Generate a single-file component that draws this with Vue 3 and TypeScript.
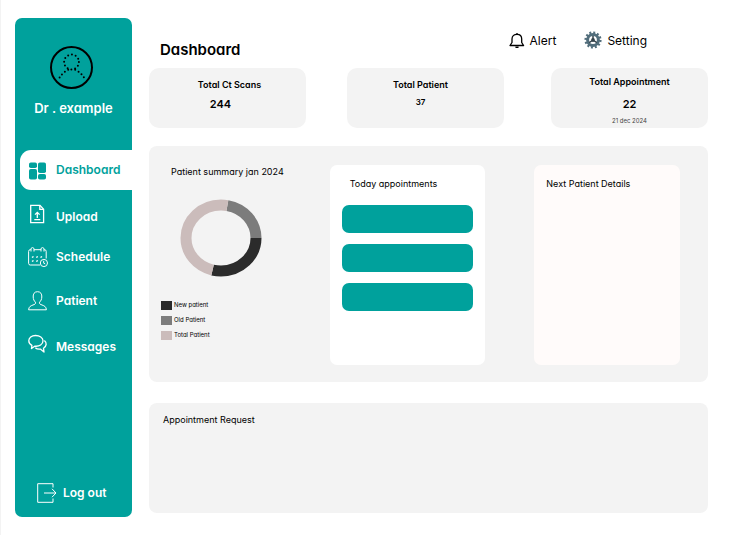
<script setup lang="ts">
interface NavItem {
  id: string
  label: string
}

interface Stat {
  id: string
  label: string
  value: string
  note?: string
}

interface Segment {
  label: string
  color: string
  start: number
  share: number
}

const navItems: NavItem[] = [
  { id: 'dashboard', label: 'Dashboard' },
  { id: 'upload', label: 'Upload' },
  { id: 'schedule', label: 'Schedule' },
  { id: 'patient', label: 'Patient' },
  { id: 'messages', label: 'Messages' },
]

const stats: Stat[] = [
  { id: 'scans', label: 'Total Ct Scans', value: '244' },
  { id: 'patients', label: 'Total Patient', value: '37' },
  { id: 'appointments', label: 'Total Appointment', value: '22', note: '21 dec 2024' },
]

// start and share are percentages of the ring, clockwise from three o'clock
const segments: Segment[] = [
  { label: 'New patient', color: '#2b2b2b', start: 0, share: 29 },
  { label: 'Old Patient', color: '#7c7c7c', start: 78, share: 22 },
  { label: 'Total Patient', color: '#cbbcbb', start: 29, share: 49 },
]

const slots: number[] = [1, 2, 3]
</script>

<template>
  <div class="page">
    <aside class="sidebar">
      <div class="profile">
        <svg class="avatar" viewBox="0 0 43 43" aria-hidden="true">
          <circle cx="21.5" cy="21.5" r="20.5" fill="none" stroke="#000" stroke-width="2" />
          <g fill="none" stroke="#000" stroke-width="2" stroke-linecap="round" stroke-dasharray="0 3.9">
            <circle cx="21.5" cy="16" r="7.4" />
            <path d="M18.2 23.8C14 26 10.5 29 8.2 34" />
            <path d="M25.2 23.8C29.5 26 33 29 35.3 34" />
          </g>
        </svg>
        <p class="name">Dr . example</p>
      </div>

      <nav class="nav">
        <a v-for="item in navItems" :key="item.id" href="#" class="nav-item" :class="{ active: item.id === 'dashboard' }">
          <svg v-if="item.id === 'dashboard'" class="icon" viewBox="0 0 20 20" fill="currentColor" aria-hidden="true">
            <rect x="1" y="2.500" width="8" height="5.500" rx="1.800" />
            <rect x="1" y="9" width="8" height="10.500" rx="1.800" />
            <rect x="10" y="2.500" width="8" height="10.500" rx="1.800" />
            <rect x="10" y="14" width="8" height="5.500" rx="1.800" />
          </svg>
          <svg v-else-if="item.id === 'upload'" class="icon raised" viewBox="0 0 20 20" fill="none" stroke="currentColor" stroke-width="1.3" aria-hidden="true">
            <path d="M2.7 1.4H12l3.6 3.8v13.4H2.7z" />
            <path d="M11.8 1.6v3.8h3.6" />
            <path d="M9.3 14V8.4M7 10.6l2.3-2.3 2.3 2.3M6.3 15.6h6" />
          </svg>
          <svg v-else-if="item.id === 'schedule'" class="icon" viewBox="0 0 20 20" fill="none" stroke="currentColor" aria-hidden="true">
            <path d="M12 18H2.200Q.6 18 .6 16.300V4.400Q.6 2.700 2.200 2.700H3M6 2.700h7M16 2.700h.6q1.600 0 1.600 1.700V11.500M3 4.500V1.400Q4.500-.2 6 1.400V4.500M13 4.500V1.400q1.500-1.600 3 0V4.500" />
            <path stroke-width="1.500" d="M4 10.500l1.500-1M8.300 10.500l1.500-1M12.500 10.500l1.500-1M4 14.500l1.500-1M8.300 14.500l1.500-1" />
            <circle cx="15.900" cy="16" r="3.600" fill="#00a19c" />
            <path d="M15.700 13.800v2.400l1.500.7" />
          </svg>
          <svg v-else-if="item.id === 'patient'" class="icon" viewBox="0 0 20 20" fill="none" stroke="currentColor" aria-hidden="true">
            <path d="M9.500.7C6.300.7 5 3 5.200 6c.1 2.300.9 4 2.200 5.100.4 1.300 0 2-1.400 2.500C2.600 14.800.8 15.600.6 18.800h17.800c-.2-3.200-2-4-5.400-5.200-1.400-.5-1.800-1.200-1.400-2.500 1.300-1.100 2.100-2.800 2.200-5.100C14 3 12.700.7 9.500.7z" />
          </svg>
          <svg v-else class="icon raised" viewBox="0 0 20 20" fill="none" stroke="currentColor" stroke-width="1.300" stroke-linejoin="round" aria-hidden="true">
            <path d="M7.500 1.500C3.600 1.500.8 3.700.8 6.800c0 2.100 1.200 3.700 3.100 4.600L3.500 14.500l3.200-2.300C11.500 12.700 15 10.400 15 6.800 15 3.700 11.700 1.500 7.500 1.500z" />
            <path d="M16.400 6.500c2.500 2.200 2.500 5.700-.9 7.700l.5 3.900-3.700-3c-2 .2-3.900-.3-5-1.300" />
          </svg>
          <span>{{ item.label }}</span>
        </a>
      </nav>

      <a href="#" class="logout">
        <svg class="icon" viewBox="0 0 20 20" fill="none" stroke="currentColor" aria-hidden="true">
          <path d="M16 4.500V.7H.7v18.600H16V15.500" />
          <path d="M7 10h12M15 5.800L19 10l-4 4.200" />
        </svg>
        <span>Log out</span>
      </a>
    </aside>

    <main class="content">
      <header class="topbar">
        <h1>Dashboard</h1>
        <div class="actions">
          <button type="button" class="action">
            <svg class="bell" viewBox="0 0 16 16" fill="none" stroke="#000" stroke-width="1.300" stroke-linejoin="round" aria-hidden="true">
              <path d="M1 12.500h13.600L12.700 9.500V6C12.700 3.200 10.700 1.300 8 1.300S3 3.200 3 6V9.500z" />
              <path d="M8 0v1.500M6.500 13.700q1.500 1.300 3 0" />
            </svg>
            <span>Alert</span>
          </button>
          <button type="button" class="action">
            <svg class="gear" viewBox="0 0 18 18" aria-hidden="true">
              <circle cx="9" cy="8" r="7.300" fill="none" stroke="#526e7c" stroke-width="2.600" stroke-dasharray="1.911 1.911" />
              <circle cx="9" cy="8" r="5.400" fill="none" stroke="#526e7c" stroke-width="3" />
              <path d="M9 8V4M9 8l-3.800 2.600M9 8l3.800 2.600" stroke="#34434b" stroke-width="1.500" />
              <circle cx="9" cy="8" r="1.900" fill="#34434b" />
            </svg>
            <span>Setting</span>
          </button>
        </div>
      </header>

      <section class="stats">
        <article v-for="stat in stats" :key="stat.id" class="stat" :class="stat.id">
          <h2>{{ stat.label }}</h2>
          <p class="value">{{ stat.value }}</p>
          <p v-if="stat.note" class="note">{{ stat.note }}</p>
        </article>
      </section>

      <section class="overview">
        <div class="summary">
          <h2>Patient summary jan 2024</h2>
          <svg class="donut" viewBox="0 0 82 78" role="img" aria-label="Patient summary">
            <ellipse
              v-for="segment in segments"
              :key="segment.label"
              cx="41"
              cy="39"
              rx="35"
              ry="33"
              fill="none"
              :stroke="segment.color"
              stroke-width="11"
              pathLength="100"
              :stroke-dasharray="`${segment.share} ${100 - segment.share}`"
              :stroke-dashoffset="-segment.start"
            />
          </svg>
          <ul class="legend">
            <li v-for="segment in segments" :key="segment.label">
              <i class="swatch" :style="{ background: segment.color }"></i>{{ segment.label }}
            </li>
          </ul>
        </div>
        <div class="today">
          <h2>Today appointments</h2>
          <ul class="slots">
            <li v-for="slot in slots" :key="slot" class="slot"></li>
          </ul>
        </div>
        <div class="next">
          <h2>Next Patient Details</h2>
        </div>
      </section>

      <section class="requests">
        <h2>Appointment Request</h2>
      </section>
    </main>
  </div>
</template>

<style>
body {
  margin: 0;
  background: #fff;
}
</style>

<style scoped>
* {
  box-sizing: border-box;
}

.page {
  display: flex;
  gap: 17px;
  min-height: 100vh;
  padding: 18px 39px 18px 14px;
  border-left: 1px solid #f3f3f3;
  font-family: Inter, "Open Sans", sans-serif;
  font-feature-settings: "cv11";
  color: #000;
}

h1,
h2,
p,
ul {
  margin: 0;
  padding: 0;
}

h2 {
  font-size: 9px;
  line-height: 14px;
  font-weight: 400;
}

ul {
  list-style: none;
}

a {
  text-decoration: none;
}

svg {
  flex: none;
}

.sidebar {
  display: flex;
  flex: none;
  flex-direction: column;
  width: 117px;
  border-radius: 7px;
  background: #00a19c;
  color: #fff;
  font-size: 12px;
  line-height: 18px;
  font-weight: 600;
}

.profile {
  display: flex;
  flex-direction: column;
  align-items: center;
  gap: 10px;
  padding: 28px 0 33px;
}

.avatar {
  width: 43px;
  height: 43px;
  margin-right: 4px;
}

.name {
  font-size: 13px;
}

.nav {
  display: grid;
  grid-template-rows: 40px 47px 40px 44px 46px;
  align-items: end;
  padding-left: 5px;
}

.nav-item {
  display: flex;
  align-items: center;
  gap: 8px;
  height: 40px;
  padding-left: 8px;
  color: #fff;
}

.nav-item.active {
  border-radius: 11px 0 0 11px;
  background: #fff;
  color: #00a19c;
}

.icon {
  width: 20px;
  height: 20px;
  overflow: visible;
}

.icon.raised {
  margin-bottom: 6px;
}

.logout {
  display: flex;
  align-items: center;
  gap: 6px;
  margin-top: auto;
  padding: 0 0 14px 22px;
  color: #fff;
}

.content {
  display: flex;
  flex: 1;
  flex-direction: column;
  min-width: 0;
  padding-bottom: 4px;
}

.topbar {
  display: flex;
  justify-content: space-between;
  height: 50px;
  padding: 12px 61px 0 11px;
}

h1 {
  padding-top: 10px;
  font-size: 15px;
  line-height: 20px;
  font-weight: 600;
}

.actions {
  display: flex;
  gap: 28px;
  height: 22px;
}

.action {
  display: flex;
  align-items: center;
  gap: 5px;
  padding: 0;
  border: 0;
  background: none;
  color: #000;
  font: inherit;
  font-feature-settings: inherit;
  font-size: 12px;
  line-height: 16px;
}

.bell {
  width: 16px;
  height: 16px;
  overflow: visible;
}

.gear {
  width: 18px;
  height: 18px;
  overflow: visible;
}

.stats {
  display: grid;
  grid-template-columns: 157fr 41fr 157fr 47fr 157fr;
}

.stat {
  display: flex;
  flex-direction: column;
  align-items: center;
  min-height: 60px;
  padding-top: 10px;
  border-radius: 10px;
  background: #f3f3f3;
}

.stat h2,
.value {
  font-weight: 600;
}

.value {
  padding-top: 4px;
  font-size: 11px;
  line-height: 16px;
}

.scans {
  padding-right: 14px;
}

.scans h2 {
  margin-right: -18px;
}

.patients {
  grid-column: 3;
  padding-right: 10px;
}

.patients .value {
  padding-top: 2px;
  font-size: 8px;
}

.appointments {
  grid-column: 5;
  padding-top: 7px;
}

.appointments .value {
  padding-top: 7px;
}

.note {
  padding-top: 5px;
  color: #444;
  font-size: 6px;
  line-height: 8px;
}

.overview {
  display: grid;
  grid-template-columns: minmax(0, 120fr) minmax(0, 156fr) minmax(0, 146fr);
  column-gap: 49px;
  min-height: 236px;
  margin-top: 18px;
  padding: 19px 28px 17px 12px;
  border-radius: 8px;
  background: #f3f3f3;
}

.summary h2 {
  padding-left: 10px;
  white-space: nowrap;
}

.donut {
  display: block;
  width: 82px;
  height: 78px;
  margin: 20px 0 0 19px;
}

.legend {
  display: grid;
  gap: 5px;
  margin-top: 23px;
}

.legend li {
  display: flex;
  align-items: center;
  gap: 2px;
  height: 10px;
  font-size: 6px;
  line-height: 10px;
}

.swatch {
  width: 11px;
  height: 9px;
}

.today,
.next {
  padding: 12px;
  border-radius: 7px;
  background: #fff;
}

.today h2 {
  padding-left: 8px;
}

.slots {
  display: grid;
  gap: 11px;
  margin-top: 14px;
}

.slot {
  height: 28px;
  border-radius: 7px;
  background: #00a19c;
}

.next {
  background: #fffbfa;
}

.requests {
  flex: 1;
  min-height: 110px;
  margin-top: 21px;
  padding: 10px 14px;
  border-radius: 8px;
  background: #f3f3f3;
}
</style>
